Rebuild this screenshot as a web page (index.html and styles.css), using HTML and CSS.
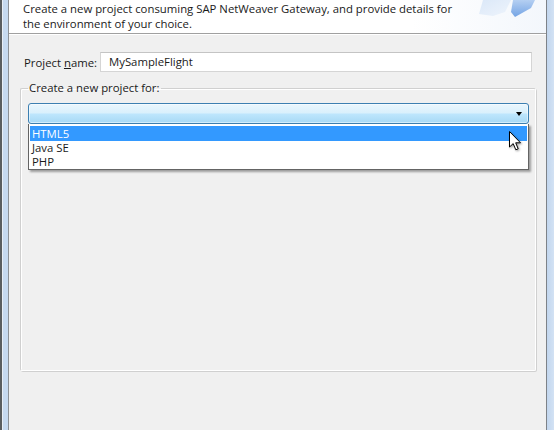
FILE: index.html
```html
<!DOCTYPE html>
<html>
<head>
<meta charset="utf-8">
<link rel="stylesheet" href="styles.css">
</head>
<body>
<div class="window">
  <div class="frame-left"></div>
  <div class="content">
    <div class="header">
      <p class="desc">Create a new project consuming SAP NetWeaver Gateway, and provide details for<br>the environment of your choice.</p>
      <svg class="banner" width="70" height="30" viewBox="0 0 70 30">
        <defs>
          <linearGradient id="g1" x1="0" y1="0" x2="1" y2="1">
            <stop offset="0" stop-color="#dbe8f8"/>
            <stop offset="1" stop-color="#eef4fc"/>
          </linearGradient>
          <linearGradient id="g2" x1="0" y1="0" x2="0" y2="1">
            <stop offset="0" stop-color="#a9c8f0"/>
            <stop offset="1" stop-color="#5d95e0"/>
          </linearGradient>
        </defs>
        <polygon points="12,0 40,0 34,12 22,16 8,14" fill="url(#g1)"/>
        <polygon points="42,0 64,0 60,8 44,17 40,12" fill="url(#g2)" opacity="0.85"/>
      </svg>
    </div>
    <div class="body">
      <div class="row">
        <label class="lbl">Project <u>n</u>ame:</label>
        <div class="input">MySampleFlight</div>
      </div>
      <fieldset class="group">
        <legend>Create a new project for:</legend>
        <div class="combo-wrap">
          <div class="combo"><span class="arrow"></span></div>
          <ul class="list">
            <li class="sel">HTML5</li>
            <li>Java SE</li>
            <li>PHP</li>
          </ul>
          <svg class="cursor" width="14" height="22" viewBox="0 0 14 22">
            <path d="M0.5,0.5 L0.5,16 L4.2,12.6 L6.8,18.8 L9.2,17.8 L6.7,11.8 L11.5,11.8 Z" fill="#fff" stroke="#000" stroke-width="1" stroke-linejoin="miter"/>
          </svg>
        </div>
      </fieldset>
    </div>
  </div>
  <div class="frame-right"></div>
</div>
</body>
</html>
```
FILE: styles.css
```css
html, body {
  margin: 0;
  padding: 0;
  height: 100%;
  background: #f0f0f0;
  font-family: "Open Sans", "Noto Sans", sans-serif;
  font-size: 11.35px;
  color: #1a1a1a;
}
.window {
  display: flex;
  height: 430px;
  width: 554px;
  overflow: hidden;
}
.frame-left {
  width: 6px;
  flex: none;
  border-left: 2px solid #5a5d60;
  border-right: 1px solid #8c9096;
  box-shadow: inset 1px 0 0 #e8eef6;
  background: #c6d9f0;
}
.frame-right {
  width: 7px;
  flex: none;
  border-left: 1px solid #7d8288;
  background: linear-gradient(to right, #c2d6ee, #d3e2f4);
}
.content {
  flex: 1;
  display: flex;
  flex-direction: column;
  background: #f0f0f0;
}
.header {
  position: relative;
  height: 33px;
  background: linear-gradient(to right, #ffffff 75%, #f3f7fc 100%);
  border-bottom: 1px solid #a0a0a0;
  box-shadow: 0 1px 0 #ffffff;
}
.desc {
  margin: 0;
  padding: 1px 0 0 14px;
  line-height: 15px;
  white-space: nowrap;
}
.banner {
  position: absolute;
  right: 5px;
  top: 0;
}
.body {
  padding: 18px 0 0 11px;
}
.row {
  display: flex;
  align-items: center;
  padding-left: 4px;
  padding-right: 14px;
}
.lbl {
  width: 76px;
  flex: none;
  white-space: nowrap;
}
.input {
  flex: 1;
  height: 18px;
  line-height: 18px;
  border: 1px solid #d5d5d5;
  border-top-color: #c4c4c4;
  background: #fff;
  padding-left: 8px;
}
.group {
  margin: 9px 10px 0 0;
  padding: 8px 6px 0 7px;
  height: 280px;
  border: 1px solid #d5dfe5;
  border-color: #d0d0d0 #ffffff #ffffff #d0d0d0;
  box-shadow: 1px 1px 0 #d0d0d0, inset 1px 1px 0 #ffffff;
  border-radius: 2px;
}
.group legend {
  padding: 0 2px 0 1px;
  margin-left: 0;
  line-height: 14px;
}
.combo-wrap {
  position: relative;
}
.combo {
  position: relative;
  height: 19px;
  border: 1px solid #3c7fb1;
  border-radius: 3px;
  background: linear-gradient(to bottom, #eaf6fd 0%, #d9f0fc 48%, #bee6fd 52%, #a7d9f5 100%);
  box-shadow: inset 0 0 0 1px rgba(255,255,255,0.5);
}
.arrow {
  position: absolute;
  right: 6px;
  top: 8px;
  width: 0;
  height: 0;
  border-left: 3.5px solid transparent;
  border-right: 3.5px solid transparent;
  border-top: 4px solid #000;
}
.list {
  position: absolute;
  left: 0;
  right: 0;
  top: 21px;
  margin: 0;
  padding: 2px 1px 0 1px;
  list-style: none;
  background: #fff;
  border: 1px solid #646464;
  border-top: none;
  box-shadow: 2px 2px 2px rgba(0,0,0,0.35);
}
.list li {
  height: 14px;
  line-height: 14px;
  padding-left: 2px;
}
.list li.sel {
  background: #3399ff;
  color: #fff;
  height: 15px;
  line-height: 15px;
}
.cursor {
  position: absolute;
  left: 481px;
  top: 28px;
  filter: drop-shadow(1px 1px 1px rgba(0,0,0,0.4));
}
```
